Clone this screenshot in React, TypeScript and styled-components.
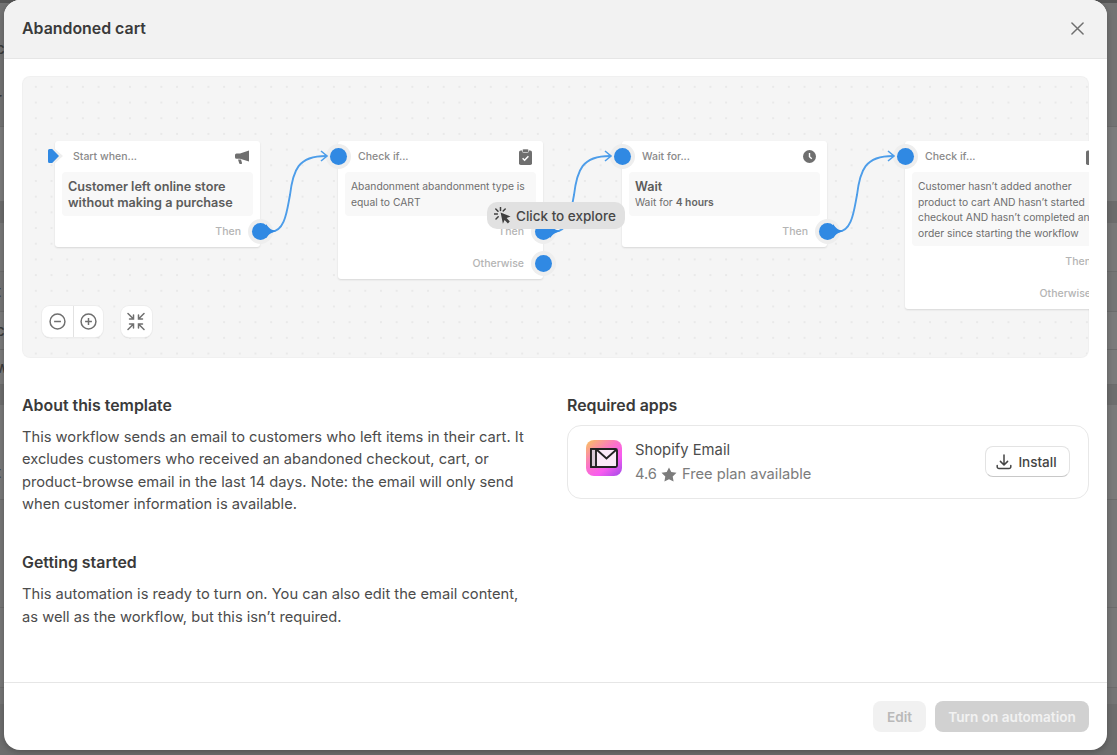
import React from "react";
import styled, { createGlobalStyle } from "styled-components";

const Global = createGlobalStyle`
  html, body { margin: 0; padding: 0; height: 100%; overflow: hidden; }
  body { font-family: Inter, "Liberation Sans", sans-serif; background: #6d6d6d; }
  * { box-sizing: border-box; }
`;

const Page = styled.div`
  position: relative;
  width: 1117px;
  height: 755px;
  overflow: hidden;
  background: #6d6d6d;
`;

const BackdropRow = styled.div<{ $h: number; $tone: string; $line?: boolean }>`
  height: ${(p) => p.$h}px;
  background: ${(p) => p.$tone};
  border-bottom: ${(p) => (p.$line ? "1px solid #6c6c6c" : "0")};
  display: flex;
  align-items: center;
  overflow: hidden;
`;

const BackdropGlyph = styled.span`
  margin-left: -4px;
  font-size: 15px;
  font-weight: 500;
  color: #3a3a3a;
`;

const Modal = styled.div`
  position: absolute;
  left: 4px;
  top: 0;
  width: 1103px;
  height: 750px;
  background: #fff;
  border-radius: 16px;
  overflow: hidden;
  display: flex;
  flex-direction: column;
  color: #303030;
  box-shadow: 0 2px 6px rgba(0, 0, 0, 0.25);
`;

const Header = styled.header`
  height: 59px;
  flex: none;
  background: #f2f2f2;
  border-bottom: 1px solid #e6e6e6;
  display: flex;
  align-items: center;
  justify-content: space-between;
  padding: 0 23px 2px 18px;
`;

const Title = styled.h1`
  margin: 0;
  font-size: 15.9px;
  font-weight: 600;
  color: #3a3a3a;
`;

const Body = styled.div`
  flex: 1;
  padding: 17px 18px 0;
  display: flex;
  flex-direction: column;
`;

const Canvas = styled.div`
  position: relative;
  height: 282px;
  width: 1067px;
  flex: none;
  border-radius: 8px;
  overflow: hidden;
  background-color: #f5f5f5;
  background-image: radial-gradient(circle, #e9e9e9 0.8px, transparent 1px);
  background-size: 15.7px 15.7px;
  background-position: 6px 3px;
  box-shadow: inset 0 0 0 1px #f0f0f0;
`;

const Node = styled.div<{ $x: number }>`
  position: absolute;
  left: ${(p) => p.$x}px;
  top: 65px;
  width: 205px;
  background: #fff;
  border-radius: 3px;
  box-shadow: 0 1px 2px rgba(0, 0, 0, 0.12);
  padding: 0 7px;
`;

const NodeHead = styled.div<{ $pad: number; $right: number }>`
  height: 31px;
  display: flex;
  align-items: center;
  justify-content: space-between;
  padding: 0 ${(p) => p.$right}px 0 ${(p) => p.$pad}px;
  font-size: 10.5px;
  font-weight: 500;
  color: #8a8a8a;
`;

const NodeBody = styled.div`
  background: #f8f8f8;
  border-radius: 4px;
  padding: 7px 6px 5px;
  min-height: 44px;
  font-size: 10.3px;
  line-height: 15.6px;
  color: #6e6e6e;

  b {
    font-weight: 600;
    color: #666;
  }
`;

const NodeLead = styled.div`
  font-size: 12.65px;
  line-height: 16px;
  font-weight: 600;
  color: #5c5c5c;
`;

const OutRow = styled.div`
  position: relative;
  height: 31px;
  display: flex;
  align-items: center;
  justify-content: flex-end;
  padding-right: 12px;
  font-size: 10.5px;
  font-weight: 500;
  color: #b4b4b4;
  & + & {
    margin-top: 1px;
  }
`;

const OutPort = styled.span`
  position: absolute;
  right: -16px;
  top: 7px;
  width: 17px;
  height: 17px;
  border-radius: 50%;
  background: #3089e3;
  box-shadow: 0 0 0 4px #eeeeee;
`;

const InPort = styled.span`
  position: absolute;
  left: -8px;
  top: 7px;
  width: 17px;
  height: 17px;
  border-radius: 50%;
  background: #3089e3;
  box-shadow: 0 0 0 4px #eeeeee;
`;

const StartPort = styled.svg`
  position: absolute;
  left: -7px;
  top: 5px;
`;

const Wires = styled.svg`
  position: absolute;
  left: 0;
  top: 0;
  pointer-events: none;
`;

const Explore = styled.div`
  position: absolute;
  left: 465px;
  top: 126px;
  height: 27px;
  width: 138px;
  border-radius: 10px;
  background: #e1e1e1;
  display: flex;
  align-items: center;
  gap: 5px;
  padding-left: 7px;
  font-size: 13.5px;
  font-weight: 500;
  color: #474747;
`;

const Controls = styled.div`
  position: absolute;
  left: 20px;
  top: 230px;
  display: flex;
  gap: 18px;
`;

const ControlGroup = styled.div`
  display: flex;
  background: #fff;
  border-radius: 8px;
  box-shadow: 0 0 0 1px #ededed, 0 1px 1px rgba(0, 0, 0, 0.18);
`;

const ControlButton = styled.button`
  width: 30.5px;
  height: 31px;
  border: 0;
  padding: 0;
  background: transparent;
  display: flex;
  align-items: center;
  justify-content: center;
  & + & {
    border-left: 1px solid #e2e2e2;
  }
`;

const Columns = styled.div`
  display: grid;
  grid-template-columns: 509px 522px;
  column-gap: 36px;
  margin-top: 38px;
`;

const Column = styled.section`
  display: flex;
  flex-direction: column;
`;

const SectionTitle = styled.h2`
  margin: 0 0 10px;
  font-size: 15.9px;
  line-height: 20px;
  font-weight: 600;
  color: #3a3a3a;
`;

const Para = styled.p`
  margin: 0 0 37.5px;
  font-size: 14.7px;
  line-height: 22.4px;
  color: #4c4c4c;
`;

const AppCard = styled.div`
  height: 74px;
  margin-top: -1px;
  border: 1px solid #e8e8e8;
  border-radius: 14px;
  display: flex;
  align-items: center;
  padding: 0 18px;
  gap: 13px;
`;

const AppIcon = styled.div`
  width: 36px;
  height: 36px;
  flex: none;
  align-self: flex-start;
  margin-top: 14px;
  border-radius: 8px;
  background: linear-gradient(140deg, #f9c45c 0%, #fb74c8 42%, #f85cf0 68%, #a14be8 100%);
  display: flex;
  align-items: center;
  justify-content: center;
`;

const AppInfo = styled.div`
  flex: 1;
  display: flex;
  flex-direction: column;
  gap: 6px;
`;

const AppName = styled.div`
  font-size: 14.8px;
  line-height: 18px;
  color: #4c4c4c;
`;

const AppMeta = styled.div`
  display: flex;
  align-items: center;
  gap: 4px;
  font-size: 14.7px;
  line-height: 18px;
  color: #7c7c7c;
`;

const MetaText = styled.span`
  margin-left: 1px;
`;

const InstallButton = styled.button`
  width: 85px;
  height: 31px;
  margin-top: -1px;
  border: 1px solid #e3e3e3;
  border-bottom: 1.5px solid #c8c8c8;
  border-radius: 8px;
  background: #fff;
  display: flex;
  align-items: center;
  justify-content: center;
  gap: 6px;
  font-family: inherit;
  font-size: 13.5px;
  font-weight: 500;
  color: #444;
  padding: 0 2px 0 0;
`;

const Footer = styled.footer`
  height: 68px;
  flex: none;
  border-top: 1px solid #e6e6e6;
  display: flex;
  justify-content: flex-end;
  align-items: flex-start;
  gap: 9px;
  padding: 18px 18px 0 0;
`;

const FooterButton = styled.button<{ $primary?: boolean }>`
  width: ${(p) => (p.$primary ? 154 : 53)}px;
  height: 31px;
  border: 0;
  border-radius: 8px;
  padding: 0;
  font-family: inherit;
  font-size: 13.6px;
  font-weight: 600;
  background: ${(p) => (p.$primary ? "#d1d1d1" : "#f1f1f1")};
  color: ${(p) => (p.$primary ? "#f2f2f2" : "#b9b9b9")};
`;

const CloseButton = styled.button`
  border: 0;
  background: none;
  padding: 0;
  display: flex;
`;

const Megaphone = () => (
  <svg width="16" height="14" viewBox="0 0 16 14" fill="#6f6f6f">
    <path d="M15 0.5v11L6 8.7H2.5A1.5 1.5 0 0 1 1 7.2V5a1.5 1.5 0 0 1 1.5-1.5H6z" />
    <path d="M4 9.5h3l1 3.6a.8.8 0 0 1-.8.9H6.2a1 1 0 0 1-1-.7z" />
  </svg>
);

const Clipboard = () => (
  <svg width="13" height="16" viewBox="0 0 13 16">
    <rect x="0" y="1.5" width="13" height="14.5" rx="1.8" fill="#6f6f6f" />
    <rect x="3.5" y="0" width="6" height="3.5" rx="1" fill="#6f6f6f" stroke="#fff" strokeWidth=".6" />
    <path d="M3.6 9.2l2 2 3.8-4" fill="none" stroke="#fff" strokeWidth="1.5" />
  </svg>
);

const Clock = () => (
  <svg width="13" height="13" viewBox="0 0 13 13">
    <circle cx="6.5" cy="6.5" r="6.5" fill="#6f6f6f" />
    <path d="M6.5 3v3.7l2.3 2" fill="none" stroke="#fff" strokeWidth="1.4" />
  </svg>
);

const Cursor = () => (
  <svg width="17" height="17" viewBox="0 0 17 17" fill="none" stroke="#3f3f3f" strokeWidth="1.5">
    <path d="M6.6 5.6l10 3.8-4 1.7 3.2 3.4-1.9 1.9-3.3-3.4-1.7 3.8z" fill="#3f3f3f" stroke="none" />
    <path d="M6.5 .4v3M1.8 2l2.2 2.2M.2 7h3.2M11.2 2L9.2 4M2 12l2.2-2.2" strokeLinecap="round" />
  </svg>
);

const Minus = () => (
  <svg width="17" height="17" viewBox="0 0 16 16" fill="none" stroke="#6f6f6f" strokeWidth="1.4">
    <circle cx="8" cy="8" r="7" />
    <path d="M4.8 8h6.4" />
  </svg>
);

const Plus = () => (
  <svg width="17" height="17" viewBox="0 0 16 16" fill="none" stroke="#6f6f6f" strokeWidth="1.4">
    <circle cx="8" cy="8" r="7" />
    <path d="M4.8 8h6.4M8 4.8v6.4" />
  </svg>
);

const Fit = () => (
  <svg width="18" height="19" viewBox="0 0 18 18" fill="none" stroke="#6f6f6f" strokeWidth="1.5" strokeLinecap="round">
    <path d="M1 1l5 5M6.5 2.5v4h-4M17 1l-5 5M11.5 2.5v4h4M1 17l5-5M6.5 15.5v-4h-4M17 17l-5-5M11.5 15.5v-4h4" />
  </svg>
);

const Star = () => (
  <svg width="16" height="15" viewBox="0 0 16 15" fill="#7c7c7c">
    <path d="M8 .4l2.3 4.7 5.2.7-3.8 3.6.9 5.2L8 12.2l-4.6 2.4.9-5.2L.5 5.8l5.2-.7z" />
  </svg>
);

const Download = () => (
  <svg width="16" height="16" viewBox="0 0 16 16" fill="none" stroke="#444" strokeWidth="1.5" strokeLinecap="round" strokeLinejoin="round">
    <path d="M8 1v9.4M4.4 7.4L8 11l3.6-3.6M1.2 11.4v1.4a1.8 1.8 0 0 0 1.8 1.8h10a1.8 1.8 0 0 0 1.8-1.8v-1.4" />
  </svg>
);

const Close = () => (
  <svg width="13" height="13" viewBox="0 0 14 14" fill="none" stroke="#6f6f6f" strokeWidth="1.6" strokeLinecap="round">
    <path d="M1 1l12 12M13 1L1 13" />
  </svg>
);

const MailGlyph = () => (
  <svg width="28" height="20" viewBox="0 0 28 20" stroke="#222" strokeWidth="1.9">
    <rect x="1" y="1" width="26" height="18" rx="1.5" fill="#fbeaf8" />
    <rect x="1" y="1" width="5" height="18" fill="#d9c9d6" />
    <path d="M6.5 1.5l10 9 10-9" fill="none" />
  </svg>
);

const wire = (x: number) => (
  <g key={x}>
    <path
      d={`M${x + 10} 155.5 C${x + 24} 156 ${x + 26} 134 ${x + 29} 119 C${x + 32} 94 ${x + 37} 80 ${x + 65} 80`}
      fill="none"
      stroke="#4d9de9"
      strokeWidth="1.9"
    />
    <path
      d={`M${x + 60} 75 L${x + 66} 80 L${x + 60} 85`}
      fill="none"
      stroke="#4d9de9"
      strokeWidth="1.6"
    />
    <path d={`M${x + 5} 148 C${x + 8} 152 ${x + 10} 154 ${x + 15} 155 C${x + 10} 157 ${x + 8} 158 ${x + 5} 162 z`} fill="#3089e3" />
  </g>
);

const backdropRows = [
  { h: 3, tone: "#555555" },
  { h: 22, tone: "#737373" },
  { h: 46, tone: "#737373", glyph: "c" },
  { h: 56, tone: "#737373", glyph: "r", line: true },
  { h: 75, tone: "#7c7c7c", line: true },
  { h: 21, tone: "#6c6c6c" },
  { h: 49, tone: "#787878", line: true },
  { h: 40, tone: "#757575", line: true, glyph: "t" },
  { h: 38, tone: "#7b7b7b", line: true, glyph: "c" },
  { h: 35, tone: "#7b7b7b", line: true, glyph: "w" },
  { h: 20, tone: "#6e6e6e" },
  { h: 56, tone: "#7a7a7a", glyph: "l" },
  { h: 22, tone: "#7a7a7a", glyph: "t" },
  { h: 17, tone: "#7a7a7a", line: true },
  { h: 108, tone: "#777777", line: true },
  { h: 80, tone: "#787878", line: true },
  { h: 16, tone: "#757575" },
  { h: 51, tone: "#6d6d6d" },
];

export default function App() {
  return (
    <Page>
      <Global />
      {backdropRows.map((r, i) => (
        <BackdropRow key={i} $h={r.h} $tone={r.tone} $line={r.line}>
          {r.glyph && <BackdropGlyph>{r.glyph}</BackdropGlyph>}
        </BackdropRow>
      ))}
      <Modal>
        <Header>
          <Title>Abandoned cart</Title>
          <CloseButton aria-label="Close">
            <Close />
          </CloseButton>
        </Header>
        <Body>
          <Canvas>
            <Node $x={33}>
              <StartPort width="18" height="20" viewBox="0 0 18 20">
                <path d="M0 3h7l8 7-8 7H0z" fill="#eeeeee" />
                <path d="M0 4.6A1.6 1.6 0 0 1 1.6 3h2.6L11 10l-6.8 7H1.6A1.6 1.6 0 0 1 0 15.4z" fill="#3089e3" />
              </StartPort>
              <NodeHead $pad={11} $right={3}>
                Start when...
                <Megaphone />
              </NodeHead>
              <NodeBody>
                <NodeLead>Customer left online store without making a purchase</NodeLead>
              </NodeBody>
              <OutRow>
                Then
                <OutPort />
              </OutRow>
            </Node>
            <Node $x={316}>
              <InPort />
              <NodeHead $pad={13} $right={4}>
                Check if...
                <Clipboard />
              </NodeHead>
              <NodeBody>Abandonment abandonment type is equal to CART</NodeBody>
              <OutRow>
                Then
                <OutPort />
              </OutRow>
              <OutRow>
                Otherwise
                <OutPort />
              </OutRow>
            </Node>
            <Node $x={600}>
              <InPort />
              <NodeHead $pad={13} $right={4}>
                Wait for...
                <Clock />
              </NodeHead>
              <NodeBody>
                <NodeLead>Wait</NodeLead>
                Wait for <b>4 hours</b>
              </NodeBody>
              <OutRow>
                Then
                <OutPort />
              </OutRow>
            </Node>
            <Node $x={883}>
              <InPort />
              <NodeHead $pad={13} $right={4}>
                Check if...
                <Clipboard />
              </NodeHead>
              <NodeBody>
                Customer hasn’t added another product to cart AND hasn’t started checkout AND hasn’t completed an order since starting the workflow
              </NodeBody>
              <OutRow>
                Then
                <OutPort />
              </OutRow>
              <OutRow>
                Otherwise
                <OutPort />
              </OutRow>
            </Node>
            <Wires width="1067" height="282">
              {wire(239)}
              {wire(523)}
              {wire(806)}
            </Wires>
            <Explore>
              <Cursor />
              Click to explore
            </Explore>
            <Controls>
              <ControlGroup>
                <ControlButton aria-label="Zoom out">
                  <Minus />
                </ControlButton>
                <ControlButton aria-label="Zoom in">
                  <Plus />
                </ControlButton>
              </ControlGroup>
              <ControlGroup>
                <ControlButton aria-label="Fit">
                  <Fit />
                </ControlButton>
              </ControlGroup>
            </Controls>
          </Canvas>
          <Columns>
            <Column>
              <SectionTitle>About this template</SectionTitle>
              <Para>
                This workflow sends an email to customers who left items in their cart. It excludes customers who received an abandoned checkout, cart, or product-browse email in the last 14 days. Note: the email will only send when customer information is available.
              </Para>
              <SectionTitle>Getting started</SectionTitle>
              <Para>
                This automation is ready to turn on. You can also edit the email content, as well as the workflow, but this isn’t required.
              </Para>
            </Column>
            <Column>
              <SectionTitle>Required apps</SectionTitle>
              <AppCard>
                <AppIcon>
                  <MailGlyph />
                </AppIcon>
                <AppInfo>
                  <AppName>Shopify Email</AppName>
                  <AppMeta>
                    4.6
                    <Star />
                    <MetaText>Free plan available</MetaText>
                  </AppMeta>
                </AppInfo>
                <InstallButton>
                  <Download />
                  Install
                </InstallButton>
              </AppCard>
            </Column>
          </Columns>
        </Body>
        <Footer>
          <FooterButton>Edit</FooterButton>
          <FooterButton $primary>Turn on automation</FooterButton>
        </Footer>
      </Modal>
    </Page>
  );
}
